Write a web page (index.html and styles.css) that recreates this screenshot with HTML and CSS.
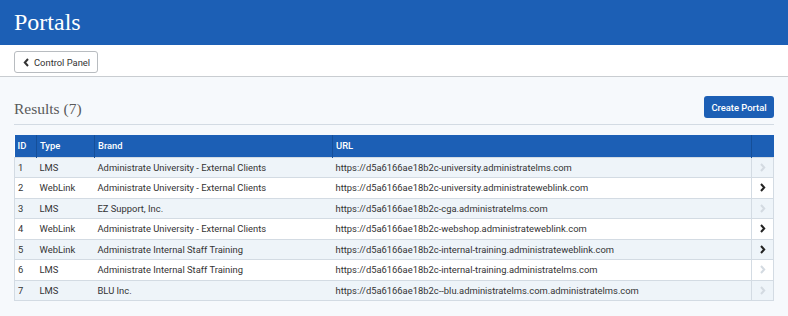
FILE: index.html
```html
<!DOCTYPE html>
<html lang="en">
<head>
    <meta charset="UTF-8">
    <meta name="viewport" content="width=device-width, initial-scale=1.0">
    <title>Portals</title>
    <link rel="stylesheet" href="styles.css">
</head>
<body>

    <!-- Page title -->
    <header class="page-header">
        <h1>Portals</h1>
    </header>

    <!-- Back navigation -->
    <div class="toolbar">
        <button class="back-button">
            <svg width="6" height="9" viewBox="0 0 6 9"><path d="M5 1 L1.8 4.5 L5 8" fill="none" stroke="#333" stroke-width="2"/></svg>
            Control Panel
        </button>
    </div>

    <main class="content">
        <div class="results-head">
            <h2>Results (7)</h2>
            <button class="create-button">Create Portal</button>
        </div>

        <table class="results">
            <thead>
                <tr>
                    <th class="col-id">ID</th>
                    <th class="col-type">Type</th>
                    <th class="col-brand">Brand</th>
                    <th class="col-url">URL</th>
                    <th class="col-go"></th>
                </tr>
            </thead>
            <tbody>
                <tr>
                    <td>1</td><td>LMS</td><td>Administrate University - External Clients</td>
                    <td>https://d5a6166ae18b2c-university.administratelms.com</td>
                    <td class="go off"><svg width="6" height="9" viewBox="0 0 6 9"><path d="M1 1 L4.2 4.5 L1 8"/></svg></td>
                </tr>
                <tr>
                    <td>2</td><td>WebLink</td><td>Administrate University - External Clients</td>
                    <td>https://d5a6166ae18b2c-university.administrateweblink.com</td>
                    <td class="go"><svg width="6" height="9" viewBox="0 0 6 9"><path d="M1 1 L4.2 4.5 L1 8"/></svg></td>
                </tr>
                <tr>
                    <td>3</td><td>LMS</td><td>EZ Support, Inc.</td>
                    <td>https://d5a6166ae18b2c-cga.administratelms.com</td>
                    <td class="go off"><svg width="6" height="9" viewBox="0 0 6 9"><path d="M1 1 L4.2 4.5 L1 8"/></svg></td>
                </tr>
                <tr>
                    <td>4</td><td>WebLink</td><td>Administrate University - External Clients</td>
                    <td>https://d5a6166ae18b2c-webshop.administrateweblink.com</td>
                    <td class="go"><svg width="6" height="9" viewBox="0 0 6 9"><path d="M1 1 L4.2 4.5 L1 8"/></svg></td>
                </tr>
                <tr>
                    <td>5</td><td>WebLink</td><td>Administrate Internal Staff Training</td>
                    <td>https://d5a6166ae18b2c-internal-training.administrateweblink.com</td>
                    <td class="go"><svg width="6" height="9" viewBox="0 0 6 9"><path d="M1 1 L4.2 4.5 L1 8"/></svg></td>
                </tr>
                <tr>
                    <td>6</td><td>LMS</td><td>Administrate Internal Staff Training</td>
                    <td>https://d5a6166ae18b2c-internal-training.administratelms.com</td>
                    <td class="go off"><svg width="6" height="9" viewBox="0 0 6 9"><path d="M1 1 L4.2 4.5 L1 8"/></svg></td>
                </tr>
                <tr>
                    <td>7</td><td>LMS</td><td>BLU Inc.</td>
                    <td>https://d5a6166ae18b2c--blu.administratelms.com.administratelms.com</td>
                    <td class="go off"><svg width="6" height="9" viewBox="0 0 6 9"><path d="M1 1 L4.2 4.5 L1 8"/></svg></td>
                </tr>
            </tbody>
        </table>
    </main>

</body>
</html>
```

FILE: styles.css
```css
* {
    box-sizing: border-box;
    margin: 0;
    padding: 0;
}

body {
    font-family: Roboto, Arial, sans-serif;
    font-size: 9.4px;
    color: #333;
    background-color: #f6f9fc;
    height: 316px;
    overflow: hidden;
}

.page-header {
    height: 45px;
    background-color: #1c5fb5;
    padding: 0 14px;
    display: flex;
    align-items: center;
}

.page-header h1 {
    font-family: "Liberation Serif", serif;
    font-weight: normal;
    font-size: 24px;
    color: #ffffff;
}

.toolbar {
    height: 32px;
    background-color: #ffffff;
    border-bottom: 1px solid #c9cdd1;
    padding: 6px 14px 0;
}

.back-button {
    display: flex;
    align-items: center;
    gap: 5px;
    height: 22px;
    padding: 0 7px 0 8px;
    white-space: nowrap;
    font-family: Roboto, Arial, sans-serif;
    font-size: 9.4px;
    color: #333;
    background-color: #ffffff;
    border: 1px solid #b8bcc0;
    border-radius: 3px;
}

.content {
    padding: 19px 14px 0;
}

.results-head {
    display: flex;
    justify-content: space-between;
    align-items: flex-end;
    border-bottom: 1px solid #d3dbe3;
    padding-bottom: 5px;
}

.results-head h2 {
    font-family: "Liberation Serif", serif;
    font-weight: normal;
    font-size: 15.5px;
    color: #5a5a5a;
    line-height: 20px;
}

.create-button {
    height: 22px;
    width: 70px;
    margin-bottom: 1px;
    font-family: Roboto, Arial, sans-serif;
    font-size: 9.4px;
    font-weight: 500;
    color: #ffffff;
    background-color: #1c5fb5;
    border: none;
    border-radius: 3px;
}

.results {
    width: 100%;
    margin-top: 10px;
    border-collapse: collapse;
    background-color: #ffffff;
}

.results th {
    height: 22px;
    background-color: #1c5fb5;
    color: #ffffff;
    font-weight: 500;
    text-align: left;
    padding: 0 3px;
    border-left: 1px solid #154f99;
}

.results th:first-child {
    border-left: none;
}

.col-id { width: 22px; }
.col-type { width: 58px; }
.col-brand { width: 238px; }
.col-go { width: 22px; }

.results td {
    height: 20.5px;
    padding: 0 3px;
    border: 1px solid #d3dbe3;
    border-left: none;
    border-right: none;
    white-space: nowrap;
}

.results td:first-child {
    border-left: 1px solid #d3dbe3;
}

.results tbody tr:nth-child(odd) {
    background-color: #eef4f9;
}

.results td.go {
    border-left: 1px solid #d3dbe3;
    border-right: 1px solid #d3dbe3;
    text-align: center;
    line-height: 0;
}

.go svg path {
    fill: none;
    stroke: #222;
    stroke-width: 2;
}

.go.off svg path {
    stroke: #d3dae1;
}
```
